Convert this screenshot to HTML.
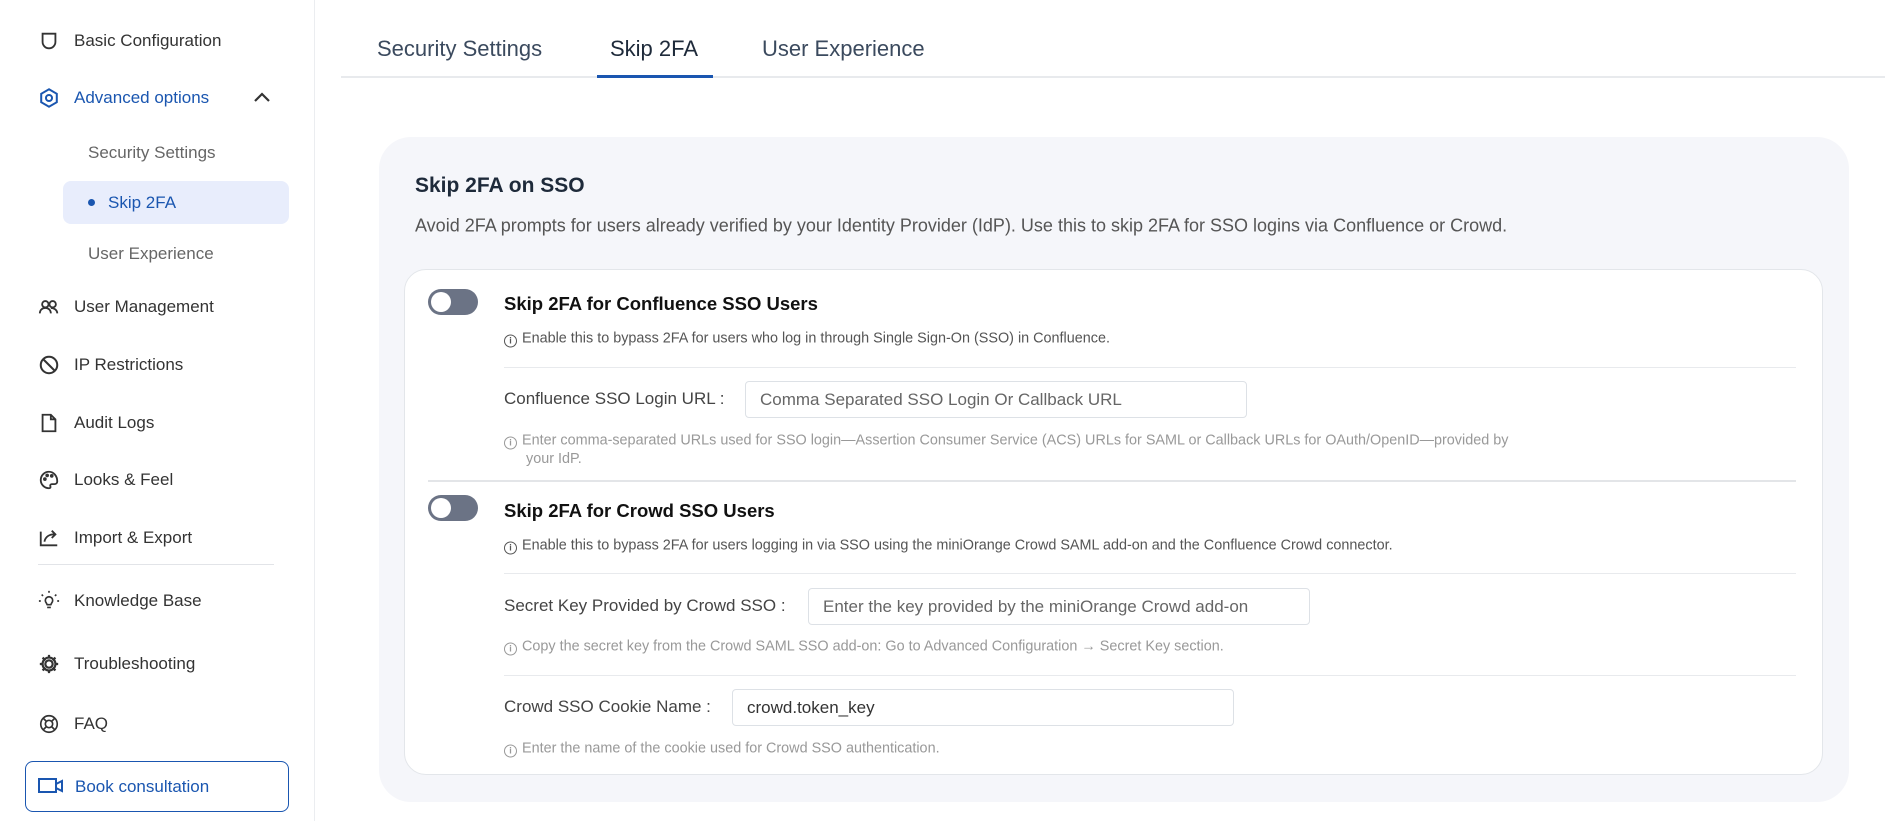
<!DOCTYPE html>
<html><head><meta charset="utf-8"><style>
*{box-sizing:border-box;margin:0;padding:0}
body{width:1896px;height:821px;background:#fff;font-family:"Liberation Sans",sans-serif;position:relative;overflow:hidden;color:#333}
.a{position:absolute;white-space:nowrap}
.side{position:absolute;left:0;top:0;width:315px;height:821px;border-right:1px solid #ebedf0}
.si{position:absolute;left:74px;font-size:17px;color:#333;transform:translateY(-50%)}
.ic{position:absolute;left:38px;width:22px;height:22px;transform:translateY(-50%)}
.sub{position:absolute;left:88px;font-size:17px;color:#666;transform:translateY(-50%)}
.tab{position:absolute;top:36px;font-size:22px;color:#3b4a5e}
.lbl{font-size:17px;color:#444;transform:translateY(-50%)}
.inp{position:absolute;border:1px solid #dde1e6;border-radius:4px;background:#fff;font-size:17px;color:#666;padding-left:14px;display:flex;align-items:center}
.help{font-size:14.4px;color:#999;transform:translateY(-50%)}
.info{font-size:14.4px;color:#555;transform:translateY(-50%)}
.tg{position:absolute;left:428px;width:50px;height:26px;border-radius:13px;background:#6b7385}
.tg::after{content:"";position:absolute;left:3px;top:3px;width:20px;height:20px;border-radius:50%;background:#fff}
.hr{position:absolute;height:1px;background:#e8eaed}
.ii{display:inline-block;width:13px;height:13px;border:1.3px solid currentColor;border-radius:50%;font-size:9px;line-height:11px;text-align:center;margin-right:5px;vertical-align:-1px;font-weight:bold}
</style></head><body>
<div class="side">
<svg class="ic" style="top:41px" viewBox="0 0 24 24" fill="none" stroke="#333" stroke-width="2"><path d="M5 4h14v9a7 7 0 0 1-14 0z"/></svg>
<div class="si" style="top:41px">Basic Configuration</div>
<svg class="ic" style="top:98px" viewBox="0 0 24 24" fill="none" stroke="#1a56b0" stroke-width="2.2"><path d="M12 2.5l8.5 4.9v9.2L12 21.5l-8.5-4.9V7.4z"/><circle cx="12" cy="12" r="3.3"/></svg>
<div class="si" style="top:98px;color:#1a56b0">Advanced options</div>
<svg class="a" style="left:253px;top:91px" width="18" height="12" viewBox="0 0 18 12" fill="none" stroke="#333" stroke-width="2.2"><path d="M2 10l7-7 7 7"/></svg>
<div class="sub" style="top:153px">Security Settings</div>
<div class="a" style="left:63px;top:181px;width:226px;height:43px;background:#e8edfc;border-radius:8px"></div>
<div class="a" style="left:88px;top:199px;width:7px;height:7px;border-radius:50%;background:#1a56b0"></div>
<div class="sub" style="left:108px;top:203px;color:#1a56b0">Skip 2FA</div>
<div class="sub" style="top:254px">User Experience</div>
<svg class="ic" style="top:307px" viewBox="0 0 24 24" fill="none" stroke="#333" stroke-width="2"><circle cx="8" cy="9" r="3.5"/><circle cx="16" cy="9" r="3.5"/><path d="M2 19c0-4 3-6 6-6s6 2 6 6M14 13c3 0 7 2 7 6"/></svg>
<div class="si" style="top:307px">User Management</div>
<svg class="ic" style="top:365px" viewBox="0 0 24 24" fill="none" stroke="#333" stroke-width="2.2"><circle cx="12" cy="12" r="9"/><path d="M5.6 5.6l12.8 12.8"/></svg>
<div class="si" style="top:365px">IP Restrictions</div>
<svg class="ic" style="top:423px" viewBox="0 0 24 24" fill="none" stroke="#333" stroke-width="2"><path d="M5 3h9l5 5v13H5z M14 3v5h5"/></svg>
<div class="si" style="top:423px">Audit Logs</div>
<svg class="ic" style="top:480px" viewBox="0 0 24 24" fill="none" stroke="#333" stroke-width="2"><path d="M12 3a9 9 0 1 0 0 18c1.5 0 2-1 1.5-2s0-2.5 1.5-2.5H18a3 3 0 0 0 3-3c0-6-4-10.5-9-10.5z"/><circle cx="7.5" cy="11" r="1"/><circle cx="10" cy="7" r="1"/><circle cx="15" cy="7.5" r="1"/></svg>
<div class="si" style="top:480px">Looks &amp; Feel</div>
<svg class="ic" style="top:538px" viewBox="0 0 24 24" fill="none" stroke="#333" stroke-width="2"><path d="M3 5v15h18M7 16c1-5 5-8 11-8M15 4l4 4-4 4"/></svg>
<div class="si" style="top:538px">Import &amp; Export</div>
<div class="a" style="left:38px;top:564px;width:236px;height:1px;background:#e2e4e8"></div>
<svg class="ic" style="top:601px" viewBox="0 0 24 24" fill="none" stroke="#333" stroke-width="1.8"><path d="M9 14a4 4 0 1 1 6 0l-1 2h-4zM10 19h4M1 12h2M21 12h2M4 5l1.5 1.5M20 5l-1.5 1.5M12 1v2"/></svg>
<div class="si" style="top:601px">Knowledge Base</div>
<svg class="ic" style="top:664px" viewBox="0 0 24 24" fill="none" stroke="#333" stroke-width="2.4"><circle cx="12" cy="12" r="4"/><path d="M12 2v4M12 18v4M2 12h4M18 12h4M5 5l3 3M16 16l3 3M19 5l-3 3M8 16l-3 3"/><circle cx="12" cy="12" r="7"/></svg>
<div class="si" style="top:664px">Troubleshooting</div>
<svg class="ic" style="top:724px" viewBox="0 0 24 24" fill="none" stroke="#333" stroke-width="1.8"><circle cx="12" cy="12" r="9"/><circle cx="12" cy="12" r="4"/><path d="M6 6l3 3M18 6l-3 3M6 18l3-3M18 18l-3-3"/></svg>
<div class="si" style="top:724px">FAQ</div>
<div class="a" style="left:25px;top:761px;width:264px;height:51px;border:1.5px solid #1a56b0;border-radius:8px"></div>
<svg class="a" style="left:38px;top:776px" width="26" height="20" viewBox="0 0 26 20" fill="none" stroke="#1a56b0" stroke-width="2"><rect x="1" y="3" width="17" height="13"/><path d="M18 8l6-3v10l-6-3"/></svg>
<div class="si" style="left:75px;top:787px;color:#1a56b0">Book consultation</div>
</div>

<div class="a" style="left:341px;top:76px;width:1544px;height:2px;background:#e8eaed"></div>
<div class="tab" style="left:377px">Security Settings</div>
<div class="tab" style="left:610px;color:#1e2a3a">Skip 2FA</div>
<div class="tab" style="left:762px">User Experience</div>
<div class="a" style="left:597px;top:75px;width:116px;height:3px;background:#1a56b0"></div>

<div class="a" style="left:379px;top:137px;width:1470px;height:665px;background:#f5f6fa;border-radius:32px"></div>
<div class="a" style="left:415px;top:174px;font-size:21px;color:#1e2a3a;font-weight:600">Skip 2FA on SSO</div>
<div class="a lbl" style="left:415px;top:226px;color:#555;font-size:18px">Avoid 2FA prompts for users already verified by your Identity Provider (IdP). Use this to skip 2FA for SSO logins via Confluence or Crowd.</div>
<div class="a" style="left:404px;top:269px;width:1419px;height:506px;background:#fff;border:1px solid #e3e6ea;border-radius:22px"></div>

<div class="tg" style="top:289px"></div>
<div class="a" style="left:504px;top:293px;font-size:18.5px;font-weight:bold;color:#111">Skip 2FA for Confluence SSO Users</div>
<div class="a info" style="left:504px;top:339px"><span class="ii">i</span>Enable this to bypass 2FA for users who log in through Single Sign-On (SSO) in Confluence.</div>
<div class="hr" style="left:504px;top:367px;width:1292px"></div>
<div class="a lbl" style="left:504px;top:399px">Confluence SSO Login URL :</div>
<div class="inp" style="left:745px;top:381px;width:502px;height:37px">Comma Separated SSO Login Or Callback URL</div>
<div class="a help" style="left:504px;top:441px"><span class="ii">i</span>Enter comma-separated URLs used for SSO login—Assertion Consumer Service (ACS) URLs for SAML or Callback URLs for OAuth/OpenID—provided by</div>
<div class="a help" style="left:526px;top:459px">your IdP.</div>
<div class="hr" style="left:428px;top:480px;width:1368px;height:2px;background:#e3e5e8"></div>

<div class="tg" style="top:495px"></div>
<div class="a" style="left:504px;top:500px;font-size:18.5px;font-weight:bold;color:#111">Skip 2FA for Crowd SSO Users</div>
<div class="a info" style="left:504px;top:546px"><span class="ii">i</span>Enable this to bypass 2FA for users logging in via SSO using the miniOrange Crowd SAML add-on and the Confluence Crowd connector.</div>
<div class="hr" style="left:504px;top:573px;width:1292px"></div>
<div class="a lbl" style="left:504px;top:606px">Secret Key Provided by Crowd SSO :</div>
<div class="inp" style="left:808px;top:588px;width:502px;height:37px">Enter the key provided by the miniOrange Crowd add-on</div>
<div class="a help" style="left:504px;top:647px"><span class="ii">i</span>Copy the secret key from the Crowd SAML SSO add-on: Go to Advanced Configuration → Secret Key section.</div>
<div class="hr" style="left:504px;top:675px;width:1292px"></div>
<div class="a lbl" style="left:504px;top:707px">Crowd SSO Cookie Name :</div>
<div class="inp" style="left:732px;top:689px;width:502px;height:37px;color:#333">crowd.token_key</div>
<div class="a help" style="left:504px;top:749px"><span class="ii">i</span>Enter the name of the cookie used for Crowd SSO authentication.</div>
</body></html>
